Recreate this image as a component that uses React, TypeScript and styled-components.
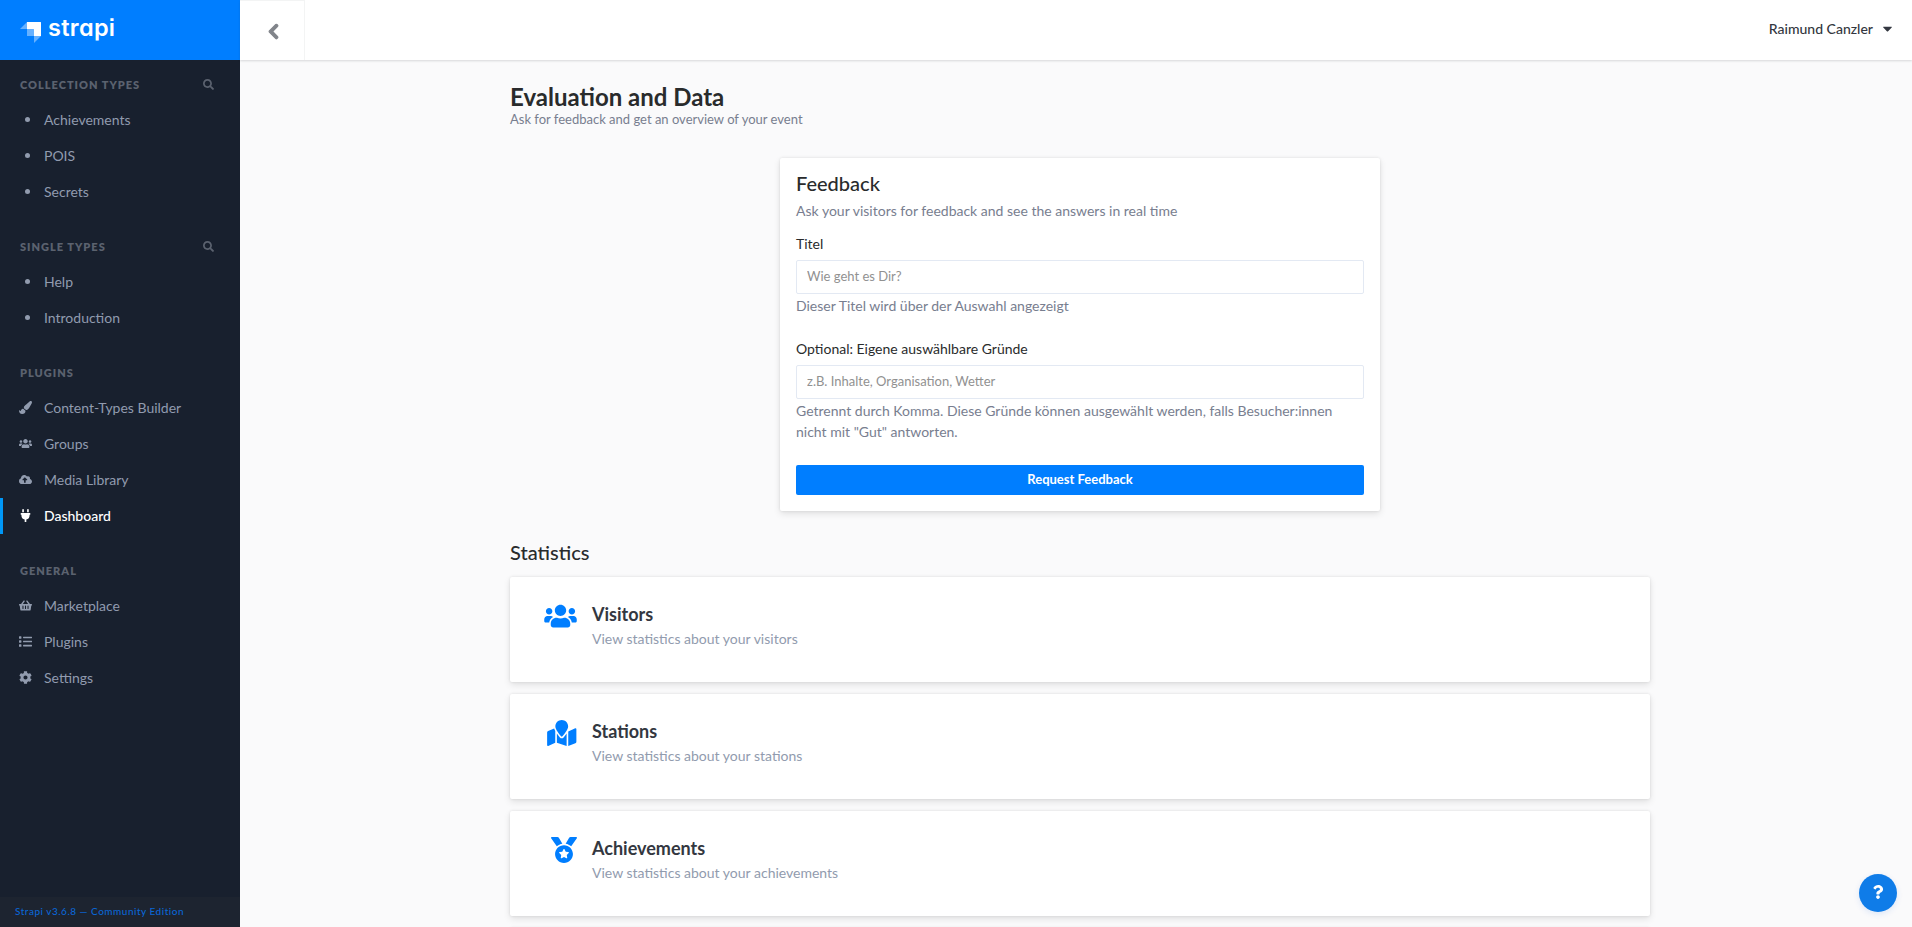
import React from "react";
import styled, { createGlobalStyle } from "styled-components";
import {
  FaCaretDown,
  FaChevronLeft,
  FaCloudUploadAlt,
  FaCog,
  FaList,
  FaMapMarked,
  FaMedal,
  FaPaintBrush,
  FaPlug,
  FaQuestion,
  FaSearch,
  FaShoppingBasket,
  FaUsers,
} from "react-icons/fa";
import type { IconType } from "react-icons";

const GlobalStyle = createGlobalStyle`
  *, *::before, *::after { box-sizing: border-box; }
  html, body { margin: 0; height: 100%; overflow: hidden; }
  body {
    background: #fafafb;
    color: #292b2c;
    font-family: Lato, sans-serif;
    font-size: 14px;
    -webkit-font-smoothing: antialiased;
  }
  h1, h2, h3, p { margin: 0; }
`;

const Shell = styled.div`
  display: flex;
  height: 100vh;
  overflow: hidden;
`;

const Sidebar = styled.aside`
  display: flex;
  flex-direction: column;
  flex: 0 0 240px;
  background: #18202e;
`;

const Brand = styled.div`
  display: flex;
  align-items: flex-start;
  height: 60px;
  padding: 0 0 0 20px;
  background: #007eff;
`;

const BrandMark = styled.svg`
  width: 22px;
  height: 22px;
  margin-top: 21px;
`;

const BrandName = styled.span`
  margin: 13px 0 0 6px;
  color: #fff;
  font-family: Inter, sans-serif;
  font-size: 23.5px;
  font-weight: 600;
  line-height: 30px;
  letter-spacing: 0.3px;
  font-feature-settings: "cv11", "ss07";
`;

const Nav = styled.nav`
  flex: 1;
  padding-top: 15px;
`;

const NavSection = styled.section`
  margin-bottom: 27px;
`;

const NavTitle = styled.div`
  display: flex;
  align-items: center;
  justify-content: space-between;
  height: 20px;
  margin-bottom: 7px;
  padding: 0 26px 2px 20px;
  color: #5b626f;
  font-size: 11px;
  font-weight: 800;
  letter-spacing: 1px;
  text-transform: uppercase;
`;

const NavLink = styled.a<{ $active?: boolean }>`
  display: flex;
  align-items: center;
  height: 36px;
  padding-bottom: 2px;
  padding-left: ${(p) => (p.$active ? 16 : 19)}px;
  border-left: ${(p) => (p.$active ? "3px solid #0097f7" : "0")};
  color: ${(p) => (p.$active ? "#fff" : "#919bae")};
  font-size: 14px;
  font-weight: ${(p) => (p.$active ? 500 : 400)};
`;

const NavIcon = styled.span`
  display: flex;
  width: 25px;
`;

const Dot = styled.span`
  width: 5px;
  height: 5px;
  margin-left: 6px;
  border-radius: 50%;
  background: #919bae;
`;

const Version = styled.footer`
  height: 30px;
  padding-left: 15px;
  background: #1d2430;
  color: #0a66d6;
  font-size: 10px;
  font-weight: 500;
  line-height: 28px;
  letter-spacing: 0.5px;
`;

const Page = styled.div`
  display: flex;
  flex: 1;
  flex-direction: column;
  min-width: 0;
`;

const TopBar = styled.header`
  display: flex;
  z-index: 1;
  flex: 0 0 60px;
  justify-content: space-between;
  background: #fff;
  box-shadow: 0 1px 2px 0 rgba(40, 42, 49, 0.16);
`;

const BackButton = styled.button`
  display: flex;
  align-items: center;
  justify-content: center;
  width: 65px;
  height: 60px;
  padding: 1px 0 0 2px;
  border: 1px solid #f3f4f4;
  border-width: 1px 1px 0 0;
  background: #fff;
  color: #81848a;
  svg {
    overflow: visible;
    stroke-width: 34px;
    stroke-linejoin: round;
  }
`;

const User = styled.div`
  display: flex;
  align-items: center;
  gap: 7px;
  height: 57px;
  padding-right: 17px;
  color: #333740;
  font-size: 14px;
  font-weight: 500;
`;

const Content = styled.main`
  width: 1140px;
  margin: 0 0 0 270px;
  padding-top: 21px;
`;

const PageTitle = styled.h1`
  color: #292b2c;
  font-size: 24px;
  font-weight: 700;
  line-height: 32px;
`;

const PageSubtitle = styled.p`
  margin-top: -1px;
  color: #787e8f;
  font-size: 13px;
  line-height: 15px;
`;

const FeedbackCard = styled.section`
  width: 600px;
  height: 353px;
  margin: 31px auto 0;
  padding: 14px 16px;
  border-radius: 2px;
  background: #fff;
  box-shadow: 0 3px 7px rgba(0, 0, 0, 0.1), 0 0 3px rgba(0, 0, 0, 0.1);
`;

const SectionTitle = styled.h2`
  color: #292b2c;
  font-size: 20px;
  font-weight: 500;
  line-height: 22px;
`;

const Lead = styled.p`
  margin-top: 6px;
  color: #787e8f;
  font-size: 14px;
  line-height: 21px;
`;

const Field = styled.div<{ $gap: number }>`
  display: flex;
  flex-direction: column;
  margin-top: ${(p) => p.$gap}px;
`;

const Label = styled.label`
  color: #292b2c;
  font-size: 14px;
  font-weight: 400;
  line-height: 21px;
`;

const Input = styled.input`
  height: 34px;
  margin-top: 6px;
  padding: 0 10px 2px;
  border: 1px solid #e3e9f3;
  border-radius: 2px;
  outline: 0;
  font-family: inherit;
  font-size: 13px;
  &::placeholder {
    color: #919191;
    opacity: 1;
  }
`;

const Hint = styled.p`
  margin-top: 1px;
  color: #787e8f;
  font-size: 14px;
  line-height: 21px;
`;

const SubmitButton = styled.button`
  display: block;
  width: 100%;
  height: 30px;
  margin-top: 23px;
  padding: 0 0 2px;
  border: 0;
  border-radius: 2px;
  background: #007eff;
  color: #fff;
  font-family: inherit;
  font-size: 13px;
  font-weight: 700;
`;

const Statistics = styled.section`
  margin-top: 30px;
`;

const StatList = styled.div`
  display: flex;
  flex-direction: column;
  gap: 12px;
  margin-top: 14px;
`;

const StatCard = styled.article`
  display: flex;
  height: 105px;
  padding-top: 26px;
  border-radius: 2px;
  background: #fff;
  box-shadow: 0 3px 7px rgba(0, 0, 0, 0.1), 0 0 3px rgba(0, 0, 0, 0.1);
`;

const StatIcon = styled.span<{ $width: number }>`
  display: flex;
  justify-content: flex-end;
  width: 66.500px;
  height: 26px;
  color: #007eff;
  svg {
    width: ${(p) => p.$width}px;
    height: 26px;
  }
`;

const StatText = styled.div`
  margin: -1px 0 0 15.5px;
`;

const StatTitle = styled.h3`
  color: #333740;
  font-size: 18px;
  font-weight: 700;
  line-height: 24px;
`;

const StatNote = styled.p`
  margin-top: 2px;
  color: #919bae;
  font-size: 14px;
  line-height: 21px;
`;

const HelpButton = styled.button`
  position: fixed;
  right: 15px;
  bottom: 15px;
  display: flex;
  align-items: center;
  justify-content: center;
  width: 38px;
  height: 38px;
  padding: 0 0 3px;
  border: 0;
  border-radius: 50%;
  background: #0f7ce8;
  color: #fff;
  box-shadow: 0 2px 6px rgba(0, 90, 220, 0.12);
`;

type Entry = { label: string; icon?: IconType; active?: boolean };
type Section = { title: string; search?: boolean; links: Entry[] };

const sections: Section[] = [
  {
    title: "Collection types",
    search: true,
    links: [{ label: "Achievements" }, { label: "POIS" }, { label: "Secrets" }],
  },
  { title: "Single types", search: true, links: [{ label: "Help" }, { label: "Introduction" }] },
  {
    title: "Plugins",
    links: [
      { label: "Content-Types Builder", icon: FaPaintBrush },
      { label: "Groups", icon: FaUsers },
      { label: "Media Library", icon: FaCloudUploadAlt },
      { label: "Dashboard", icon: FaPlug, active: true },
    ],
  },
  {
    title: "General",
    links: [
      { label: "Marketplace", icon: FaShoppingBasket },
      { label: "Plugins", icon: FaList },
      { label: "Settings", icon: FaCog },
    ],
  },
];

const stats = [
  { title: "Visitors", note: "View statistics about your visitors", icon: FaUsers, width: 33 },
  { title: "Stations", note: "View statistics about your stations", icon: FaMapMarked, width: 29.5 },
  { title: "Achievements", note: "View statistics about your achievements", icon: FaMedal, width: 26 },
];

export default function App() {
  return (
    <>
      <GlobalStyle />
      <Shell>
        <Sidebar>
          <Brand>
            <BrandMark viewBox="0 0 22 22">
              <path d="M7 1v7H0z" fill="#fff" opacity=".4" />
              <path d="M14 15h7l-7 7z" fill="#fff" opacity=".4" />
              <path d="M7 8h7v7H7z" fill="#fff" opacity=".4" />
              <path d="M7 1h13.5q.5 0 .5.5V15h-7V8.500q0-.5-.5-.5H7z" fill="#fff" />
            </BrandMark>
            <BrandName>strapi</BrandName>
          </Brand>
          <Nav>
            {sections.map((s) => (
              <NavSection key={s.title}>
                <NavTitle>
                  {s.title}
                  {s.search && <FaSearch size={11} />}
                </NavTitle>
                {s.links.map(({ label, icon: Icon, active }) => (
                  <NavLink key={label} $active={active}>
                    <NavIcon>{Icon ? <Icon size={13} /> : <Dot />}</NavIcon>
                    {label}
                  </NavLink>
                ))}
              </NavSection>
            ))}
          </Nav>
          <Version>Strapi v3.6.8 — Community Edition</Version>
        </Sidebar>
        <Page>
          <TopBar>
            <BackButton aria-label="Back">
              <FaChevronLeft size={17} />
            </BackButton>
            <User>
              Raimund Canzler
              <FaCaretDown size={15} />
            </User>
          </TopBar>
          <Content>
            <PageTitle>Evaluation and Data</PageTitle>
            <PageSubtitle>Ask for feedback and get an overview of your event</PageSubtitle>
            <FeedbackCard>
              <SectionTitle>Feedback</SectionTitle>
              <Lead>Ask your visitors for feedback and see the answers in real time</Lead>
              <Field $gap={12}>
                <Label htmlFor="title">Titel</Label>
                <Input id="title" placeholder="Wie geht es Dir?" />
                <Hint>Dieser Titel wird über der Auswahl angezeigt</Hint>
              </Field>
              <Field $gap={22}>
                <Label htmlFor="reasons">Optional: Eigene auswählbare Gründe</Label>
                <Input id="reasons" placeholder="z.B. Inhalte, Organisation, Wetter" />
                <Hint>
                  Getrennt durch Komma. Diese Gründe können ausgewählt werden, falls Besucher:innen
                  nicht mit "Gut" antworten.
                </Hint>
              </Field>
              <SubmitButton>Request Feedback</SubmitButton>
            </FeedbackCard>
            <Statistics>
              <SectionTitle>Statistics</SectionTitle>
              <StatList>
                {stats.map(({ title, note, icon: Icon, width }) => (
                  <StatCard key={title}>
                    <StatIcon $width={width}>
                      <Icon />
                    </StatIcon>
                    <StatText>
                      <StatTitle>{title}</StatTitle>
                      <StatNote>{note}</StatNote>
                    </StatText>
                  </StatCard>
                ))}
                <StatCard />
              </StatList>
            </Statistics>
          </Content>
        </Page>
      </Shell>
      <HelpButton aria-label="Help">
        <FaQuestion size={14} />
      </HelpButton>
    </>
  );
}
